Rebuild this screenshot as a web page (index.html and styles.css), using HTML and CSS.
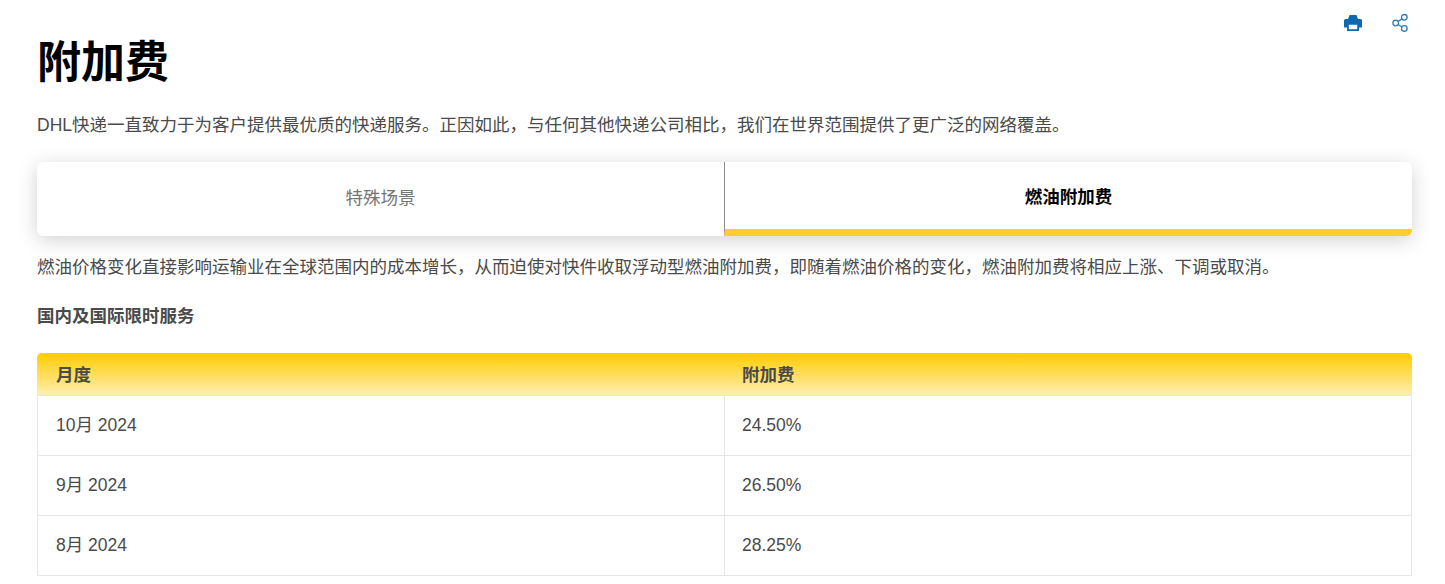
FILE: index.html
```html
<!DOCTYPE html>
<html lang="zh">
<head>
<meta charset="utf-8">
<title>附加费</title>
<link rel="stylesheet" href="styles.css">
</head>
<body>
<main class="page">
  <div class="tools">
    <svg class="icon" viewBox="0 0 20 20" width="20" height="20" aria-hidden="true"><path class="fill" d="M6.500 2h7l1.500 4H5z"/><path class="fill" d="M2.500 6h15A1.500 1.500 0 0 1 19 7.500V14.500H16V10H4v4.500H1V7.500A1.500 1.500 0 0 1 2.500 6z"/><path class="fill" fill-rule="evenodd" d="M4 10h12v8H4zM5.800 11.800v4.500h8.400v-4.500z"/></svg>
    <svg class="icon" viewBox="0 0 20 20" width="20" height="20" aria-hidden="true"><g class="line"><circle cx="14.300" cy="4.300" r="2.800"/><circle cx="5.700" cy="10" r="2.800"/><circle cx="14.300" cy="15.500" r="2.800"/><path d="M8.100 8.500 11.900 5.900M8.100 11.500l3.800 2.500"/></g></svg>
  </div>
  <h1 class="title">附加费</h1>
  <p class="intro">DHL快递一直致力于为客户提供最优质的快递服务。正因如此，与任何其他快递公司相比，我们在世界范围提供了更广泛的网络覆盖。</p>
  <div class="tabs">
    <div class="tab">特殊场景</div>
    <div class="tab tab-active">燃油附加费</div>
  </div>
  <p class="desc">燃油价格变化直接影响运输业在全球范围内的成本增长，从而迫使对快件收取浮动型燃油附加费，即随着燃油价格的变化，燃油附加费将相应上涨、下调或取消。</p>
  <p class="subhead">国内及国际限时服务</p>
  <table class="rates">
    <thead>
      <tr><th>月度</th><th>附加费</th></tr>
    </thead>
    <tbody>
      <tr><td>10月 2024</td><td>24.50%</td></tr>
      <tr><td>9月 2024</td><td>26.50%</td></tr>
      <tr><td>8月 2024</td><td>28.25%</td></tr>
    </tbody>
  </table>
</main>
</body>
</html>
```

FILE: styles.css
```css
* { box-sizing: border-box; }
html, body { margin: 0; padding: 0; background: #fff; }
body {
  font-family: "Liberation Sans", "Noto Sans CJK SC", sans-serif;
  color: #4a4a4a;
  font-size: 17.5px;
}
.page { position: relative; padding: 39px 33px 8px 37px; height: 584px; overflow: hidden; }
.tools { position: absolute; top: 13px; right: 35px; display: flex; gap: 27px; }
.icon { display: block; }
.fill { fill: #0e69b1; }
.line { fill: none; stroke: #2f7cb8; stroke-width: 1.300; }
.title {
  margin: 0;
  font-size: 44px;
  line-height: 48px;
  font-weight: 700;
  color: #000;
}
.intro { margin: 25px 0 0; line-height: 26px; }
.tabs {
  margin-top: 24px;
  height: 74px;
  display: grid;
  grid-template-columns: 687px 1fr;
  background: #fff;
  border-radius: 6px;
  box-shadow: 0 4px 20px rgba(0, 0, 0, 0.18);
  overflow: hidden;
}
.tab {
  display: flex;
  align-items: center;
  justify-content: center;
  color: #757575;
  padding-bottom: 6px;
}
.tab-active {
  color: #000;
  font-weight: 700;
  border-left: 1px solid #8c8c8c;
  border-bottom: 7px solid #ffcc33;
  padding-bottom: 0;
}
.desc { margin: 18px 0 0; line-height: 26px; }
.subhead { margin: 23px 0 0; line-height: 26px; font-weight: 700; }
.rates {
  margin-top: 24px;
  width: 100%;
  table-layout: fixed;
  border-collapse: separate;
  border-spacing: 0;
}
.rates th {
  height: 43px;
  padding: 0 18px 2px;
  text-align: left;
  font-weight: 700;
  color: #4a4a4a;
  background: linear-gradient(#ffcc00, #ffeeb0);
  border-bottom: 1px solid #e6e6e6;
}
.rates th:first-child { width: 687px; padding-left: 19px; border-top-left-radius: 5px; }
.rates th:last-child { border-top-right-radius: 5px; }
.rates td {
  height: 60px;
  padding: 17px 18px 0;
  line-height: 24px;
  vertical-align: top;
  border-bottom: 1px solid #e6e6e6;
  border-left: 1px solid #e6e6e6;
}
.rates td:last-child { padding-left: 17px; border-right: 1px solid #e6e6e6; }
```
